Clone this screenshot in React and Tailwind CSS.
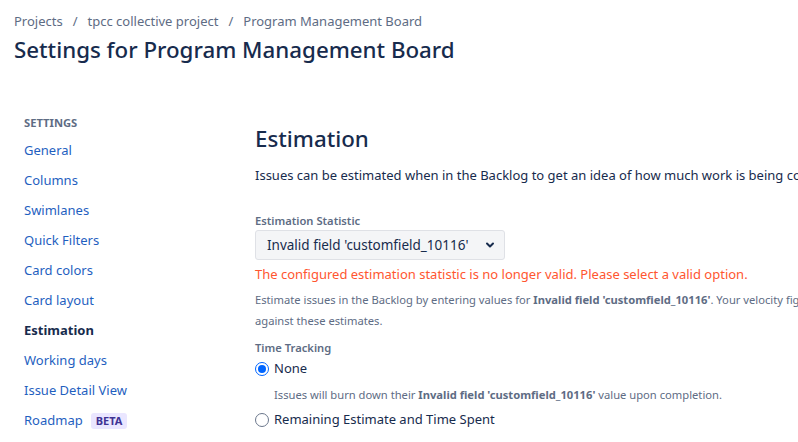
const navItems = [
  "General",
  "Columns",
  "Swimlanes",
  "Quick Filters",
  "Card colors",
  "Card layout",
  "Estimation",
  "Working days",
  "Issue Detail View",
];

export default function App() {
  return (
    <div className="h-[442px] w-[798px] overflow-hidden bg-white font-['Noto_Sans',sans-serif] text-[#172b4d]">
      {/* Header */}
      <header className="px-[14px] pt-[11px]">
        <nav className="flex items-center text-[13px] leading-[20px] text-[#5e6c84]">
          <span>Projects</span>
          <span className="px-[10px]">/</span>
          <span>tpcc collective project</span>
          <span className="px-[10px]">/</span>
          <span>Program Management Board</span>
        </nav>
        <h1 className="mt-[3px] text-[22.3px] font-medium leading-[32px] text-[#172b4d]">
          Settings for Program Management Board
        </h1>
      </header>

      <div className="flex">
        {/* Sidebar */}
        <aside className="w-[255px] shrink-0 pl-[24px] pt-[49px]">
          <div className="text-[11.2px] font-bold leading-[16px] text-[#5e6c84]">SETTINGS</div>
          <ul className="mt-[5px]">
            {navItems.map((item) => (
              <li
                key={item}
                className={
                  item === "Estimation"
                    ? "flex h-[30px] items-center text-[13px] font-bold text-[#172b4d]"
                    : "flex h-[30px] items-center text-[13px] text-[#1f5fbf]"
                }
              >
                {item}
              </li>
            ))}
            <li className="flex h-[30px] items-center text-[13px] text-[#1f5fbf]">
              Roadmap
              <span className="ml-[8px] rounded-[3px] bg-[#eae6ff] px-[5px] text-[11px] font-bold leading-[16px] text-[#403294]">
                BETA
              </span>
            </li>
          </ul>
        </aside>

        {/* Main */}
        <main className="min-w-0 flex-1 pt-[57px] whitespace-nowrap">
          <h2 className="text-[22.3px] font-medium leading-[32px] text-[#172b4d]">Estimation</h2>
          <p className="mt-[10px] text-[13px] leading-[20px]">
            Issues can be estimated when in the Backlog to get an idea of how much work is being committed to each sprint.
          </p>

          <label className="mt-[28px] block text-[11.2px] font-semibold leading-[16px] text-[#5e6c84]">
            Estimation Statistic
          </label>
          <div className="mt-[1px] flex h-[30px] w-[250px] items-center justify-between rounded-[3px] border border-[#dfe1e6] bg-[#f4f5f7] pl-[11px] pr-[8px] text-[13.5px]">
            <span>Invalid field 'customfield_10116'</span>
            <svg width="12" height="12" viewBox="0 0 12 12" fill="none">
              <path d="M3 4.5 6 7.5 9 4.5" stroke="#172b4d" strokeWidth="2" strokeLinecap="round" strokeLinejoin="round" />
            </svg>
          </div>
          <div className="mt-[4px] text-[13px] leading-[20px] text-[#ff5630]">
            The configured estimation statistic is no longer valid. Please select a valid option.
          </div>
          <p className="mt-[5px] text-[11.2px] leading-[21px] text-[#5e6c84]">
            Estimate issues in the Backlog by entering values for{" "}
            <b className="font-bold">Invalid field 'customfield_10116'</b>. Your velocity figures will be calculated
            <br />
            against these estimates.
          </p>

          <div className="mt-[9px] text-[11.2px] font-semibold leading-[16px] text-[#5e6c84]">Time Tracking</div>
          <div className="mt-[3px] flex h-[20px] items-center">
            <span className="flex h-[14px] w-[14px] items-center justify-center rounded-full border-[1.5px] border-[#0065ff]">
              <span className="h-[8px] w-[8px] rounded-full bg-[#0065ff]" />
            </span>
            <span className="ml-[5px] text-[13px]">None</span>
          </div>
          <p className="ml-[19px] mt-[6px] text-[11.2px] leading-[20px] text-[#5e6c84]">
            Issues will burn down their <b className="font-bold">Invalid field 'customfield_10116'</b> value upon completion.
          </p>
          <div className="mt-[5px] flex h-[20px] items-center">
            <span className="h-[14px] w-[14px] rounded-full border-[1.5px] border-[#6b778c]" />
            <span className="ml-[5px] text-[13px]">Remaining Estimate and Time Spent</span>
          </div>
          <p className="ml-[19px] mt-[6px] text-[11.2px] leading-[20px] text-[#5e6c84]">
            Track time against issues using Jira's <b className="font-bold">Remaining Estimate</b> and{" "}
            <b className="font-bold">Time Spent</b> fields.
          </p>
        </main>
      </div>
    </div>
  );
}
